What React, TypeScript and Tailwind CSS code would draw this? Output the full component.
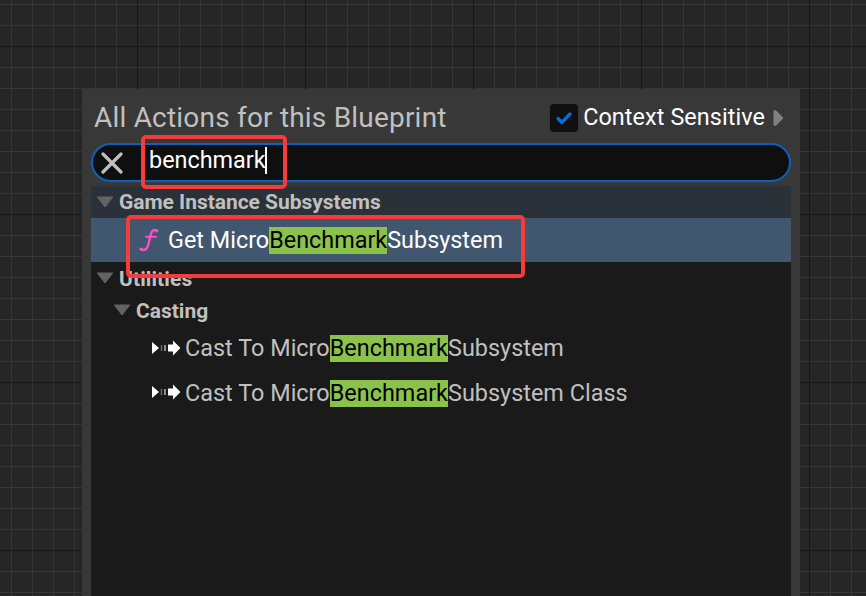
import type { ReactNode } from "react";

function Caret() {
  return (
    <svg className="block h-[12px] w-[18px] shrink-0" viewBox="0 0 18 12">
      <path d="M1.2 1H16.8L9 11Z" fill="#636363" stroke="#636363" strokeWidth="1" strokeLinejoin="round" />
    </svg>
  );
}

function CastIcon({ className }: { className: string }) {
  return (
    <svg className={`block h-[16px] w-[28px] shrink-0 ${className}`} viewBox="0 0 28 16">
      <path d="M0 2L7 8L0 14Z" fill="#fff" />
      <path d="M9.5 5V11" stroke="#666" strokeWidth="1.6" />
      <path d="M13 5V11" stroke="#999" strokeWidth="1.8" />
      <path d="M16 4.6H21V0.4L28.4 8L21 15.6V11.4H16Z" fill="#fff" />
    </svg>
  );
}

function FunctionIcon() {
  return (
    <svg className="block h-[24px] w-[20px] shrink-0" viewBox="0 0 20 24" fill="none" stroke="#f94fc0" strokeLinecap="round">
      <path d="M18 2.6C14.2 1 12.6 3.2 11.6 7L9.2 17C8.3 21.2 5.5 23 2 21.2" strokeWidth="2.5" />
      <path d="M7 8.8H17" strokeWidth="2.1" />
      <path d="M17.6 2.8H17.8M2 21H2.3" strokeWidth="3.2" />
    </svg>
  );
}

function Mark({ children }: { children: ReactNode }) {
  return <span className="flex h-[27px] items-center bg-[#8bc34a] text-black">{children}</span>;
}

function Result({ before, after }: { before: string; after: string }) {
  return (
    <span className="flex items-center whitespace-pre text-[23.4px] leading-[27px]">
      <span>{before}</span>
      <Mark>Benchmark</Mark>
      <span>{after}</span>
    </span>
  );
}

export default function App() {
  return (
    <div
      className="relative flex h-[596px] w-[866px] justify-center overflow-hidden bg-[#262626] pt-[89px] font-['Roboto',sans-serif] text-[#c0c0c0] [background-image:linear-gradient(to_right,#171717_1px,transparent_1px),linear-gradient(to_bottom,#171717_1px,transparent_1px),linear-gradient(to_right,#363636_1px,transparent_1px),linear-gradient(to_bottom,#363636_1px,transparent_1px)] [background-position:137px_0,0_46px,11px_0,0_4px] [background-size:168px_100%,100%_168px,21px_100%,100%_21px]"
    >
      <div className="mr-[-16px] flex h-[507px] w-[718px] flex-col bg-[#383838] px-[9px]">
        <div className="flex h-[54px] items-center pl-[3px]">
          <h1 className="mt-[3px] whitespace-nowrap text-[28px] leading-[33px] tracking-[0.2px]">All Actions for this Blueprint</h1>
          <div className="ml-auto flex items-center pt-[2px]">
            <div className="mt-[2px] flex size-[28px] items-center justify-center rounded-[4px] bg-[#0f0f0f]">
              <svg className="size-[18px]" viewBox="0 0 18 18">
                <path d="M3 9.6L7 13.4L15 5" fill="none" stroke="#0070e0" strokeWidth="3.4" strokeLinecap="round" strokeLinejoin="round" />
              </svg>
            </div>
            <span className="ml-[5px] whitespace-nowrap text-[23.4px] leading-[28px] tracking-[0.08px] text-white">Context Sensitive</span>
            <svg className="ml-[8px] mr-[7px] mt-[2px] h-[16px] w-[11px]" viewBox="0 0 11 16">
              <path d="M1 .8H3L10 8L3 15.2H1Z" fill="#808080" stroke="#808080" strokeLinejoin="round" />
            </svg>
          </div>
        </div>
        <div className="flex h-[39px] shrink-0 items-center rounded-full border-2 border-[#0d61bd] bg-[#0f0f0f] pl-[8px]">
          <svg className="mt-px h-[22px] w-[22px]" viewBox="0 0 22 22">
            <path d="M2 2L20 20M20 2L2 20" stroke="#c0c0c0" strokeWidth="3.2" strokeLinecap="round" />
          </svg>
          <span className="mb-[5px] ml-[26px] text-[23.4px] leading-[28px] text-white">benchmark</span>
          <span className="mb-[4px] ml-[-1px] h-[27px] w-[2px] bg-white" />
        </div>
        <div className="mt-[4px] flex-1 bg-[#1a1a1a] text-[21px] font-bold leading-[25px]">
          <div className="flex h-[32px] items-center bg-[#2b3138] pl-[5px]">
            <Caret />
            <span className="ml-[5px] tracking-[-0.04px]">Game Instance Subsystems</span>
          </div>
          <div className="flex h-[44px] items-center bg-[#40576f] pl-[48px] font-normal text-white">
            <FunctionIcon />
            <span className="ml-[9px]"><Result before="Get Micro" after="Subsystem" /></span>
          </div>
          <div className="flex h-[32px] items-center pl-[5px]">
            <Caret />
            <span className="ml-[5px] pt-[2px] tracking-[0.1px]">Utilities</span>
          </div>
          <div className="flex h-[32px] items-center pl-[22px]">
            <Caret />
            <span className="ml-[5px] pt-[2px]">Casting</span>
          </div>
          <div className="flex h-[45px] items-center pl-[61px] font-normal">
            <CastIcon className="mb-px" />
            <span className="ml-[5px] tracking-[0.025px]"><Result before="Cast To Micro" after="Subsystem" /></span>
          </div>
          <div className="flex h-[45px] items-center pl-[61px] font-normal">
            <CastIcon className="mb-[3px]" />
            <span className="ml-[5px] tracking-[0.025px]"><Result before="Cast To Micro" after="Subsystem Class" /></span>
          </div>
        </div>
      </div>
      <div className="absolute left-[141px] top-[135px] h-[54px] w-[146px] rounded-[5px] border-4 border-[#f63b3b]" />
      <div className="absolute left-[126px] top-[215px] h-[63px] w-[399px] rounded-[5px] border-4 border-[#f63b3b]" />
    </div>
  );
}
